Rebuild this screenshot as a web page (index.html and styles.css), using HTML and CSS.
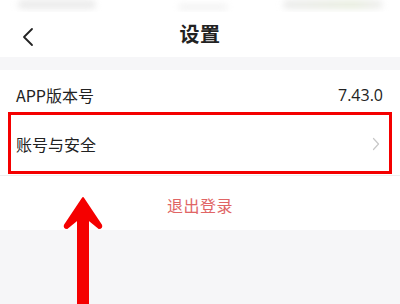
FILE: index.html
```html
<!DOCTYPE html>
<html lang="zh">
<head>
<meta charset="utf-8">
<link rel="stylesheet" href="styles.css">
</head>
<body>
<div class="page">
  <div class="status">
    <span class="blob blob-left"></span>
    <span class="blob blob-mid"></span>
    <span class="blob blob-right"></span>
  </div>
  <div class="nav">
    <svg class="back" width="12" height="20" viewBox="0 0 12 20"><path d="M10 2 L2 10 L10 18" fill="none" stroke="#222" stroke-width="1.8" stroke-linecap="round" stroke-linejoin="round"/></svg>
    <div class="title">设置</div>
  </div>
  <div class="gap"></div>
  <div class="list">
    <div class="row row-version">
      <span class="label">APP版本号</span>
      <span class="value">7.43.0</span>
    </div>
    <div class="row row-account">
      <span class="label">账号与安全</span>
      <svg class="chev" width="8" height="14" viewBox="0 0 8 14"><path d="M1.5 1.5 L6.5 7 L1.5 12.5" fill="none" stroke="#c8c8c8" stroke-width="1.2" stroke-linecap="round" stroke-linejoin="round"/></svg>
    </div>
    <div class="logout">退出登录</div>
    <div class="highlight"></div>
  </div>
  <div class="rest"></div>
  <svg class="arrow" width="50" height="110" viewBox="0 0 50 110"><path d="M23 4 L5 31 Q4 34 7 34 L18 25 L18 110 L28 110 L28 25 L39 34 Q42 34 41 31 Z" fill="#f50000" stroke="#f50000" stroke-width="2" stroke-linejoin="round"/></svg>
</div>
</body>
</html>
```
FILE: styles.css
```css
* { box-sizing: border-box; }
html, body { margin: 0; padding: 0; background: #fff; }
body { font-family: "Noto Sans CJK SC", "Noto Sans", sans-serif; color: #222; }
.page { position: relative; width: 400px; height: 304px; overflow: hidden; background: #f6f6f8; }
.status { height: 12px; background: #fff; display: flex; align-items: flex-start; padding: 0 0 0 18px; }
.blob { display: block; height: 9px; border-radius: 5px; filter: blur(3px); }
.blob-left { width: 78px; background: #ebebeb; }
.blob-mid { width: 50px; margin-left: 82px; margin-top: 4px; height: 6px; background: #f2f2f2; }
.blob-right { width: 100px; margin-left: 55px; background: linear-gradient(90deg, #ececec, #e8eddf 70%, #efefef); }
.nav { height: 45px; background: #fff; position: relative; display: flex; align-items: center; justify-content: center; }
.back { position: absolute; left: 22px; top: 15px; }
.title { font-size: 20px; font-weight: 700; letter-spacing: 0.5px; line-height: 24px; margin-top: -2px; }
.gap { height: 13px; background: #f6f6f8; }
.list { position: relative; background: #fff; }
.row { display: flex; align-items: center; justify-content: space-between; padding: 0 17px 0 16px; font-size: 16px; }
.row-version { height: 49px; padding-top: 1px; }
.row-version .value { font-family: "Open Sans", "Noto Sans", sans-serif; font-size: 16px; margin-right: 0; }
.row-account { height: 57px; padding-bottom: 6px; border-bottom: 1px solid #eeeeee; }
.chev { margin-right: 3px; }
.logout { height: 54px; display: flex; align-items: center; justify-content: center; padding-top: 4px; color: #e06565; font-size: 16px; letter-spacing: 0.5px; }
.highlight { position: absolute; left: 8px; top: 42px; width: 384px; height: 62px; border: 3px solid #f40000; }
.rest { height: 80px; background: #f6f6f8; }
.arrow { position: absolute; left: 60px; top: 194px; }
```
